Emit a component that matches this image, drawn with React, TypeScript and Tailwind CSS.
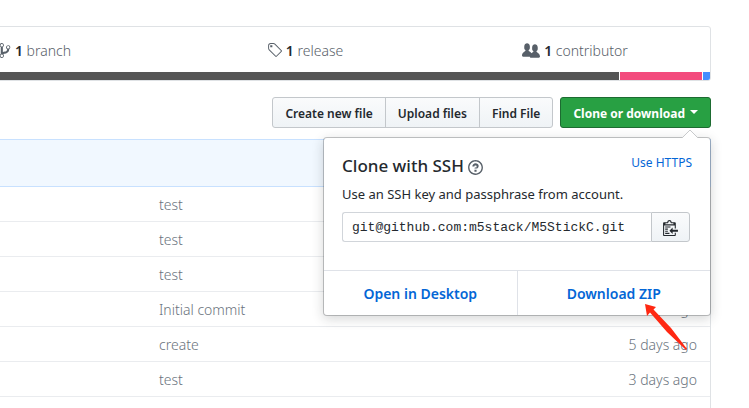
import type { ReactNode } from "react";

const icons = {
  branch: {
    width: 10,
    d: "M10 5c0-1.11-.89-2-2-2a1.993 1.993 0 0 0-1 3.72v.3c-.02.52-.23.98-.63 1.38-.4.4-.86.61-1.38.63-.83.02-1.48.16-2 .45V4.72a1.993 1.993 0 0 0-1-3.72C.88 1 0 1.89 0 3a2 2 0 0 0 1 1.72v6.56c-.59.35-1 .99-1 1.72 0 1.11.89 2 2 2 1.11 0 2-.89 2-2 0-.53-.2-1-.53-1.36.09-.06.48-.41.59-.47.25-.11.56-.17.94-.17 1.05-.05 1.95-.45 2.75-1.25S8.95 7.77 9 6.73h-.02C9.59 6.37 10 5.73 10 5zM2 1.8c.66 0 1.2.55 1.2 1.2 0 .65-.55 1.2-1.2 1.2C1.35 4.2.8 3.65.8 3c0-.65.55-1.2 1.2-1.2zm0 12.41c-.66 0-1.2-.55-1.2-1.2 0-.65.55-1.2 1.2-1.2.65 0 1.2.55 1.2 1.2 0 .65-.55 1.2-1.2 1.2zm6-8c-.66 0-1.2-.55-1.2-1.2 0-.65.55-1.2 1.2-1.2.65 0 1.2.55 1.2 1.2 0 .65-.55 1.2-1.2 1.2z",
  },
  tag: {
    width: 14,
    d: "M7.685 1.72a2.49 2.49 0 0 0-1.76-.726H3.48A2.5 2.5 0 0 0 .994 3.48v2.456c0 .656.269 1.292.726 1.76l6.024 6.024a.99.99 0 0 0 1.402 0l4.563-4.563a.99.99 0 0 0 0-1.402L7.685 1.72zM2.366 7.048A1.54 1.54 0 0 1 1.9 5.925V3.48c0-.874.716-1.58 1.58-1.58h2.456c.418 0 .825.159 1.123.467l6.104 6.094-4.702 4.702-6.094-6.115zm.626-4.066h1.989v1.989H2.982V2.982z",
  },
  people: {
    width: 16,
    d: "M16 12.999c0 .439-.45 1-1 1H7.995c-.539 0-.994-.447-.995-.999H1c-.54 0-1-.561-1-1 0-2.634 3-4 3-4s.229-.409 0-1c-.841-.621-1.058-.59-1-3 .058-2.419 1.367-3 2.5-3s2.442.58 2.5 3c.058 2.41-.159 2.379-1 3-.229.59 0 1 0 1s1.549.711 2.42 2.088C9.196 9.369 10 8.999 10 8.999s.229-.409 0-1c-.841-.62-1.058-.59-1-3 .058-2.419 1.367-3 2.5-3s2.437.581 2.495 3c.059 2.41-.158 2.38-1 3-.229.59 0 1 0 1s3.005 1.366 3.005 4z",
  },
  question: {
    width: 14,
    d: "M6 10h2v2H6v-2zm4-3.5C10 8.64 8 9 8 9H6c0-.55.45-1 1-1h.5c.28 0 .5-.22.5-.5v-1c0-.28-.22-.5-.5-.5h-1c-.28 0-.5.22-.5.5V7H4c0-1.5 1.5-3 3-3s3 1 3 2.5zM7 2.3c3.14 0 5.7 2.56 5.7 5.7s-2.56 5.7-5.7 5.7A5.71 5.71 0 0 1 1.3 8c0-3.14 2.56-5.7 5.7-5.7zM7 1C3.14 1 0 4.14 0 8s3.14 7 7 7 7-3.14 7-7-3.14-7-7-7z",
  },
  clippy: {
    width: 14,
    d: "M2 13h4v1H2v-1zm5-6H2v1h5V7zm2 3V8l-3 3 3 3v-2h5v-2H9zM4.5 9H2v1h2.5V9zM2 12h2.5v-1H2v1zm9 1h1v2c-.02.28-.11.52-.3.7-.19.18-.42.28-.7.3H1c-.55 0-1-.45-1-1V4c0-.55.45-1 1-1h3c0-1.11.89-2 2-2 1.11 0 2 .89 2 2h3c.55 0 1 .45 1 1v5h-1V6H1v9h10v-2zM2 5h8c0-.55-.45-1-1-1H8c-.55 0-1-.45-1-1s-.45-1-1-1-1 .45-1 1-.45 1-1 1H3c-.55 0-1 .45-1 1z",
  },
};

function Icon({ name, className }: { name: keyof typeof icons; className: string }) {
  const icon = icons[name];
  return (
    <svg viewBox={`0 0 ${icon.width} 16`} fill="currentColor" aria-hidden="true" className={`shrink-0 ${className}`}>
      <path fillRule="evenodd" d={icon.d} />
    </svg>
  );
}

function Stat({ icon, label }: { icon: ReactNode; label: string }) {
  return (
    <li>
      <a href="#stats" className="flex items-center justify-center gap-1 pt-[13px] pb-[11px] text-sm leading-[21px] font-light text-[#586069]">
        {icon}
        <span>
          <span className="font-semibold text-[#24292e]">1</span> {label}
        </span>
      </a>
    </li>
  );
}

const files = [
  { message: "test", age: "5 days ago" },
  { message: "test", age: "5 days ago" },
  { message: "test", age: "5 days ago" },
  { message: "Initial commit", age: "5 days ago" },
  { message: "create", age: "5 days ago" },
  { message: "test", age: "3 days ago" },
  { message: "", age: "" },
];

const grayButton =
  "border border-[#c3c7cb] bg-linear-to-b from-[#fafbfc] to-[#eff3f6] px-3 pt-[5px] pb-[3px] text-xs leading-[21px] font-semibold text-[#24292e]";

function ClonePopover() {
  return (
    <div className="absolute top-full right-0 z-10 mt-[9px] w-[388px] rounded border border-[#1b1f23]/25 bg-white bg-clip-padding shadow-[0_3px_12px_rgba(27,31,35,0.18)]">
      <svg viewBox="0 0 16 8" className="absolute -top-2 right-3 h-2 w-4" aria-hidden="true">
        <path d="M0 8 8 0l8 8" fill="#fff" stroke="#c8cacc" />
      </svg>
      <div className="px-[18px] pt-4 pb-7">
        <div className="flex items-start justify-between">
          <h2 className="flex items-center gap-1 text-[17px] leading-6 font-medium text-[#24292e]">
            Clone with SSH
            <Icon name="question" className="mt-[2px] h-[17px] w-[15px] text-[#586069]" />
          </h2>
          <a href="#https" className="text-xs leading-[18px] text-[#0366d6]">Use HTTPS</a>
        </div>
        <p className="mt-1 text-[13px] leading-6 text-[#24292e]">Use an SSH key and passphrase from account.</p>
        <div className="mt-[6px] mr-[2px] flex h-[30px]">
          <input
            aria-label="Clone URL"
            readOnly
            value="git@github.com:m5stack/M5StickC.git"
            className="min-w-0 flex-1 rounded-l-[3px] border border-r-0 border-[#d1d5da] bg-white px-[9px] pt-px font-['Liberation_Mono',monospace] text-[13px] text-[#24292e] outline-none"
          />
          <button
            type="button"
            aria-label="Copy to clipboard"
            className="flex w-[39px] items-center justify-center rounded-r-[3px] border border-[#c3c7cb] bg-linear-to-b from-[#fafbfc] to-[#eff3f6] text-[#24292e]"
          >
            <Icon name="clippy" className="h-[17px] w-[15px]" />
          </button>
        </div>
      </div>
      <div className="flex border-t border-[#dfe2e8] text-center text-sm leading-6 font-semibold text-[#0366d6]">
        <a href="#desktop" className="flex-1 border-r border-[#dfe2e8] pt-[11px] pb-[9px]">Open in Desktop</a>
        <a href="#zip" className="relative flex-1 pt-[11px] pb-[9px]">
          Download ZIP
          <svg viewBox="0 0 44 48" className="absolute top-[33px] left-[127px] h-12 w-11" fill="#ff2812" aria-hidden="true">
            <path d="M0 0 11 3 8.500 5.500 26 24 42 45 41 46 22 28 5 8.500 2 12Z" />
          </svg>
        </a>
      </div>
    </div>
  );
}

export default function App() {
  return (
    <main className="h-screen overflow-hidden bg-white pt-[26px] pr-[38px] font-['Noto_Sans',sans-serif]">
      <section className="-ml-[101px] rounded-[3px] border border-[#dfe2e5]">
        <ul className="grid grid-cols-3">
          <Stat icon={<Icon name="branch" className="h-[17px] w-3" />} label="branch" />
          <Stat icon={<Icon name="tag" className="h-[17px] w-[15px]" />} label="release" />
          <Stat icon={<Icon name="people" className="h-[18px] w-[18px]" />} label="contributor" />
        </ul>
        <div className="flex h-2 gap-px overflow-hidden rounded-br-[2px]" role="img" aria-label="Language breakdown">
          <span className="flex-1 bg-[#555555]" />
          <span className="w-[82px] bg-[#f34b7d]" />
          <span className="w-[7px] bg-[#438eff]" />
        </div>
      </section>

      <div className="mt-4 mb-[11px] flex justify-end gap-[7px]">
        <div className="flex -space-x-px">
          <button type="button" className={`rounded-l-[3px] ${grayButton}`}>Create new file</button>
          <button type="button" className={grayButton}>Upload files</button>
          <button type="button" className={`rounded-r-[3px] ${grayButton}`}>Find File</button>
        </div>
        <div className="relative">
          <button
            type="button"
            aria-expanded="true"
            className="flex items-center gap-[5px] rounded-[3px] border border-[#1d6b31] bg-[#28a043] px-3 pt-[5px] pb-[3px] text-xs leading-[21px] font-bold text-white"
          >
            Clone or download
            <span className="mb-1 border-x-4 border-t-4 border-x-transparent border-t-white" />
          </button>
          <ClonePopover />
        </div>
      </div>

      <div className="-ml-1 border border-b-0 border-[#dfe2e5]">
        <div className="-mx-px -mt-px h-12 border border-[#c8e1ff] bg-[#f1f8ff]" />
        <table className="w-full table-fixed border-separate border-spacing-0 text-sm leading-[22px] font-light text-[#6a737d]">
          <tbody>
            {files.map((file, i) => (
              <tr key={i} className="h-[35px]">
                <td className="w-[162px] border-b border-[#eaecef]" />
                <td className="border-b border-[#eaecef] pt-[7px] pb-[5px] text-left">{file.message}</td>
                <td className="w-[120px] border-b border-[#eaecef] pt-[7px] pr-[13px] pb-[5px] text-right">{file.age}</td>
              </tr>
            ))}
          </tbody>
        </table>
      </div>
    </main>
  );
}
